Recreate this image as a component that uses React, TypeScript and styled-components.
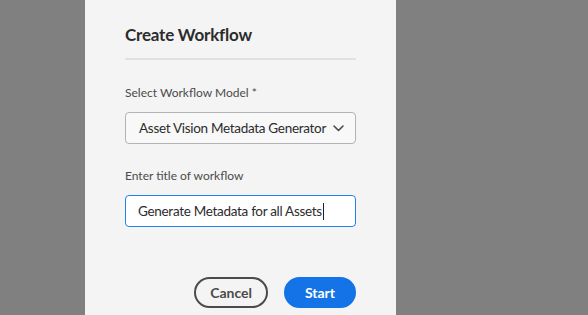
import React from "react";
import styled, { createGlobalStyle } from "styled-components";

const Global = createGlobalStyle`
  html, body { margin: 0; padding: 0; }
  body {
    width: 588px;
    height: 315px;
    overflow: hidden;
    background: #808080;
    font-family: Lato, "Noto Sans", sans-serif;
  }
`;

const Page = styled.div`
  display: flex;
  height: 315px;
  padding-left: 85px;
`;

const Dialog = styled.div`
  width: 311px;
  height: 100%;
  background: #f4f4f4;
  box-sizing: border-box;
  padding: 24px 40px 0 40px;
  display: flex;
  flex-direction: column;
`;

const Title = styled.h2`
  margin: 0;
  font-size: 17px;
  font-weight: 700;
  letter-spacing: -0.2px;
  color: #2c2c2c;
  line-height: 22px;
`;

const Divider = styled.hr`
  margin: 12px 0 0 0;
  border: none;
  height: 2px;
  background: #e1e1e1;
`;

const Field = styled.div<{ $top: number }>`
  display: flex;
  flex-direction: column;
  margin-top: ${(p) => p.$top}px;
`;

const Label = styled.label`
  font-size: 12px;
  color: #4b4b4b;
  line-height: 16px;
  margin-bottom: 11px;
`;

const Picker = styled.button`
  display: flex;
  align-items: center;
  justify-content: space-between;
  height: 32px;
  box-sizing: border-box;
  padding: 0 11px 0 13px;
  border: 1px solid #b3b3b3;
  border-radius: 4px;
  background: #f8f8f8;
  font-family: inherit;
  font-size: 13.5px;
  letter-spacing: -0.3px;
  white-space: nowrap;
  text-align: left;
  color: #2c2c2c;
  cursor: pointer;
`;

const Input = styled.div`
  display: flex;
  align-items: center;
  height: 32px;
  box-sizing: border-box;
  padding: 0 12px;
  border: 1px solid #2680eb;
  border-radius: 4px;
  background: #ffffff;
  font-size: 13.5px;
  letter-spacing: -0.3px;
  white-space: nowrap;
  color: #2c2c2c;
`;

const Caret = styled.span`
  display: inline-block;
  width: 1px;
  height: 17px;
  background: #1f1f1f;
  margin-left: 1px;
`;

const Footer = styled.div`
  display: flex;
  justify-content: flex-end;
  gap: 16px;
  margin-top: 50px;
`;

const Button = styled.button<{ $primary?: boolean }>`
  height: 31px;
  box-sizing: border-box;
  border-radius: 16px;
  padding: 0 14px;
  font-family: inherit;
  font-size: 14px;
  font-weight: 700;
  cursor: pointer;
  border: 2px solid ${(p) => (p.$primary ? "#1473e6" : "#4b4b4b")};
  background: ${(p) => (p.$primary ? "#1473e6" : "transparent")};
  color: ${(p) => (p.$primary ? "#ffffff" : "#4b4b4b")};
  min-width: 72px;
`;

const Chevron = () => (
  <svg width="11" height="7" viewBox="0 0 11 7" fill="none">
    <path d="M1 1l4.5 4.5L10 1" stroke="#4b4b4b" strokeWidth="1.6" strokeLinecap="round" strokeLinejoin="round" />
  </svg>
);

export default function App() {
  return (
    <>
      <Global />
      <Page>
        <Dialog>
          <Title>Create Workflow</Title>
          <Divider />
          <Field $top={25}>
            <Label>Select Workflow Model *</Label>
            <Picker>
              <span>Asset Vision Metadata Generator</span>
              <Chevron />
            </Picker>
          </Field>
          <Field $top={24}>
            <Label>Enter title of workflow</Label>
            <Input>
              Generate Metadata for all Assets
              <Caret />
            </Input>
          </Field>
          <Footer>
            <Button>Cancel</Button>
            <Button $primary>Start</Button>
          </Footer>
        </Dialog>
      </Page>
    </>
  );
}
